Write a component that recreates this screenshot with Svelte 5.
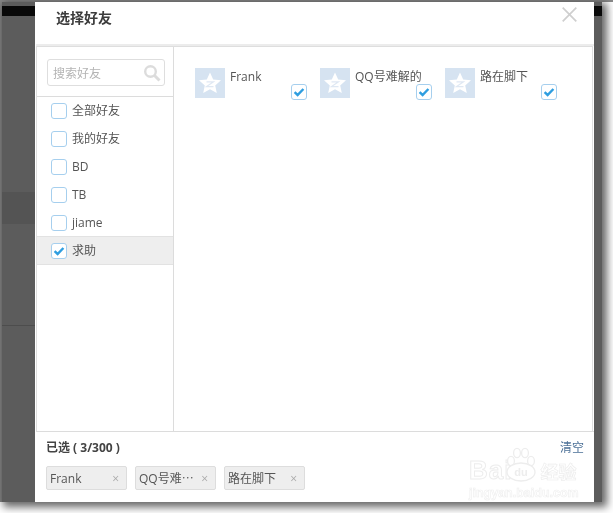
<script>
  const groups = [
    { name: '全部好友', on: false },
    { name: '我的好友', on: false },
    { name: 'BD', on: false },
    { name: 'TB', on: false },
    { name: 'jiame', on: false },
    { name: '求助', on: true }
  ];
  const friends = ['Frank', 'QQ号难解的', '路在脚下'];
  const chips = ['Frank', 'QQ号难⋯', '路在脚下'];
</script>

{#snippet box(on)}
  <svg class="box" width="16" height="16" viewBox="0 0 16 16">
    <rect x="0.5" y="0.5" width="15" height="15" rx="2.5" fill="#fff" stroke="#a6cfee" />
    {#if on}
      <path d="M3.6 8.2 L6.6 11 L12.4 5" fill="none" stroke="#2e9ee0" stroke-width="2.4" />
    {/if}
  </svg>
{/snippet}

<div class="page">
  <div class="window">
    <div class="gutter left">
      <div class="black"></div>
      <div class="band"></div>
      <div class="rule"></div>
    </div>

    <div class="dialog">
      <header>
        <h1>选择好友</h1>
        <svg class="close" width="15" height="15" viewBox="0 0 15 15">
          <path d="M0.7 0.7 L14.3 14.3 M14.3 0.7 L0.7 14.3" stroke="#cfcfcf" stroke-width="1.7" fill="none" />
        </svg>
      </header>

      <div class="body">
        <aside>
          <div class="search">
            <span>搜索好友</span>
            <svg width="18" height="18" viewBox="0 0 18 18">
              <circle cx="7.5" cy="7.5" r="5.3" fill="none" stroke="#dcdcdc" stroke-width="2.4" />
              <path d="M11.5 11.5 L16.5 16.5" stroke="#dcdcdc" stroke-width="3" />
            </svg>
          </div>
          <ul>
            {#each groups as g}
              <li class:selected={g.on}>
                {@render box(g.on)}
                <span>{g.name}</span>
              </li>
            {/each}
          </ul>
        </aside>

        <main>
          {#each friends as f}
            <div class="card">
              <svg class="avatar" width="30" height="30" viewBox="0 0 30 30">
                <rect width="30" height="30" fill="#d6e3f1" />
                <path d="M15 4.5 L18.2 11.4 L26 12.3 L20.2 17.5 L21.8 25 L15 21.2 L8.2 25 L9.8 17.5 L4 12.3 L11.8 11.4 Z" fill="#fff" />
                <path d="M11.5 13.8 H18.5 L11.5 18.6 H18.5" fill="none" stroke="#dfe8f3" stroke-width="1.2" />
              </svg>
              <span class="name">{f}</span>
              <div class="check">{@render box(true)}</div>
            </div>
          {/each}
        </main>
      </div>

      <footer>
        <div class="summary">
          <strong>已选 ( 3/300 )</strong>
          <a href="#clear">清空</a>
        </div>
        <div class="chips">
          {#each chips as c}
            <div class="chip"><span>{c}</span><i>×</i></div>
          {/each}
        </div>
        <div class="mark" aria-hidden="true">
          <div class="logo">
            <span class="bai">Bai</span>
            <svg class="paw" width="34" height="36" viewBox="0 0 34 36">
              <g fill="#fff" stroke="#ededed" stroke-width="1.3">
                <ellipse cx="7" cy="14" rx="3.4" ry="4.6" />
                <ellipse cx="13" cy="6" rx="3.4" ry="4.6" />
                <ellipse cx="21" cy="6" rx="3.4" ry="4.6" />
                <ellipse cx="27" cy="14" rx="3.4" ry="4.6" />
                <ellipse cx="17" cy="25" rx="14" ry="9" />
              </g>
              <text x="17" y="29" text-anchor="middle" font-size="11" font-weight="700" fill="#ededed">du</text>
            </svg>
            <span class="jy">经验</span>
          </div>
          <div class="url">jingyan.baidu.com</div>
        </div>
      </footer>
    </div>

    <div class="gutter right">
      <div class="black"></div>
    </div>
  </div>
</div>

<style>
  :global(body) {
    margin: 0;
    background: #fff;
  }
  .page {
    width: 613px;
    height: 513px;
    overflow: hidden;
    box-sizing: border-box;
    padding: 2px 11px 11px 2px;
    background: linear-gradient(#8a8a8a, #8a8a8a) 0 0 / 100% 2px no-repeat,
      linear-gradient(#8a8a8a, #8a8a8a) 0 0 / 2px 502px no-repeat;
    font-family: "Open Sans", "Noto Sans CJK SC", sans-serif;
    font-size: 12px;
    color: #555;
  }
  .window {
    display: flex;
    width: 600px;
    height: 500px;
    background: #5c5c5c;
    box-shadow: 3px 3px 8px 2px rgba(0, 0, 0, 0.6);
  }
  .gutter {
    flex: none;
  }
  .gutter.left {
    width: 33px;
  }
  .gutter.right {
    width: 8px;
  }
  .black {
    height: 10px;
    margin-top: 4px;
    background: #090909;
  }
  .band {
    height: 32px;
    margin-top: 176px;
    background: #545454;
  }
  .rule {
    height: 1px;
    margin-top: 101px;
    background: #4d4d4d;
  }
  .dialog {
    position: relative;
    flex: 1;
    display: flex;
    flex-direction: column;
    background: #fff;
    padding-left: 1px;
    filter: blur(0.35px);
  }
  header {
    flex: none;
    display: flex;
    justify-content: space-between;
    box-sizing: border-box;
    height: 44px;
    padding: 4px 17px 0 20px;
    border-bottom: 2px solid #ececec;
  }
  h1 {
    margin: 0;
    font-size: 14px;
    font-weight: 700;
    line-height: 24px;
    color: #3c3c3c;
  }
  .close {
    margin-top: 1px;
  }
  .body {
    flex: 1;
    display: flex;
    min-height: 0;
    border: 1px solid #dedede;
    border-bottom: 0;
    margin-right: 1px;
  }
  aside {
    width: 137px;
    flex: none;
    box-sizing: border-box;
    border-right: 1px solid #dcdcdc;
  }
  .search {
    box-sizing: border-box;
    width: 118px;
    height: 27px;
    margin: 12px 0 10px 10px;
    display: flex;
    align-items: center;
    justify-content: space-between;
    padding: 0 3px 0 5px;
    border: 1px solid #dedede;
    border-radius: 3px;
    color: #b4b4b4;
  }
  ul {
    list-style: none;
    margin: 0;
    padding: 0;
    border-top: 1px solid #dcdcdc;
  }
  li {
    height: 28px;
    display: flex;
    align-items: center;
    gap: 5px;
    padding-left: 14px;
  }
  li span {
    margin-bottom: 2px;
  }
  li.selected {
    background: #eeeeee;
    box-shadow: 0 -1px #e2e2e2, inset 0 -1px #e2e2e2;
  }
  .box {
    display: block;
    flex: none;
  }
  main {
    flex: 1;
    display: flex;
    padding: 21px 0 0 21px;
  }
  .card {
    width: 125px;
    flex: none;
    display: flex;
    align-items: flex-start;
    gap: 5px;
    position: relative;
  }
  .avatar {
    display: block;
    flex: none;
  }
  .name {
    line-height: 17px;
  }
  .check {
    position: absolute;
    left: 96px;
    top: 16px;
  }
  footer {
    position: relative;
    flex: none;
    height: 71px;
    box-sizing: border-box;
    padding: 7px 10px 0 10px;
    border-top: 1px solid #dcdcdc;
  }
  .summary {
    display: flex;
    justify-content: space-between;
    line-height: 18px;
  }
  strong {
    color: #444;
    font-weight: 700;
  }
  a {
    color: #4c7097;
    text-decoration: none;
  }
  .chips {
    display: flex;
    gap: 8px;
    margin-top: 9px;
  }
  .chip {
    box-sizing: border-box;
    width: 81px;
    height: 24px;
    display: flex;
    align-items: center;
    justify-content: space-between;
    padding: 0 7px 0 3px;
    background: #eeeeee;
    border: 1px solid #dddddd;
    border-radius: 2px;
  }
  .chip i {
    font-style: normal;
    color: #aaa;
    font-size: 12px;
  }
  .mark {
    position: absolute;
    left: 433px;
    top: 15px;
    width: 110px;
    color: #fff;
    font-family: "Liberation Sans", "Noto Sans CJK SC", sans-serif;
    font-weight: 700;
    pointer-events: none;
  }
  .logo {
    display: flex;
    align-items: flex-end;
    height: 36px;
  }
  .bai {
    font-size: 26px;
    line-height: 26px;
    letter-spacing: 1px;
    -webkit-text-stroke: 1px #ededed;
  }
  .paw {
    flex: none;
    margin-left: -8px;
  }
  .jy {
    flex: none;
    font-size: 18px;
    line-height: 20px;
    margin-left: 2px;
    -webkit-text-stroke: 0.7px #ededed;
  }
  .url {
    font-size: 12.5px;
    line-height: 14px;
    margin-top: 3px;
    white-space: nowrap;
    -webkit-text-stroke: 0.6px #eeeeee;
  }
</style>
